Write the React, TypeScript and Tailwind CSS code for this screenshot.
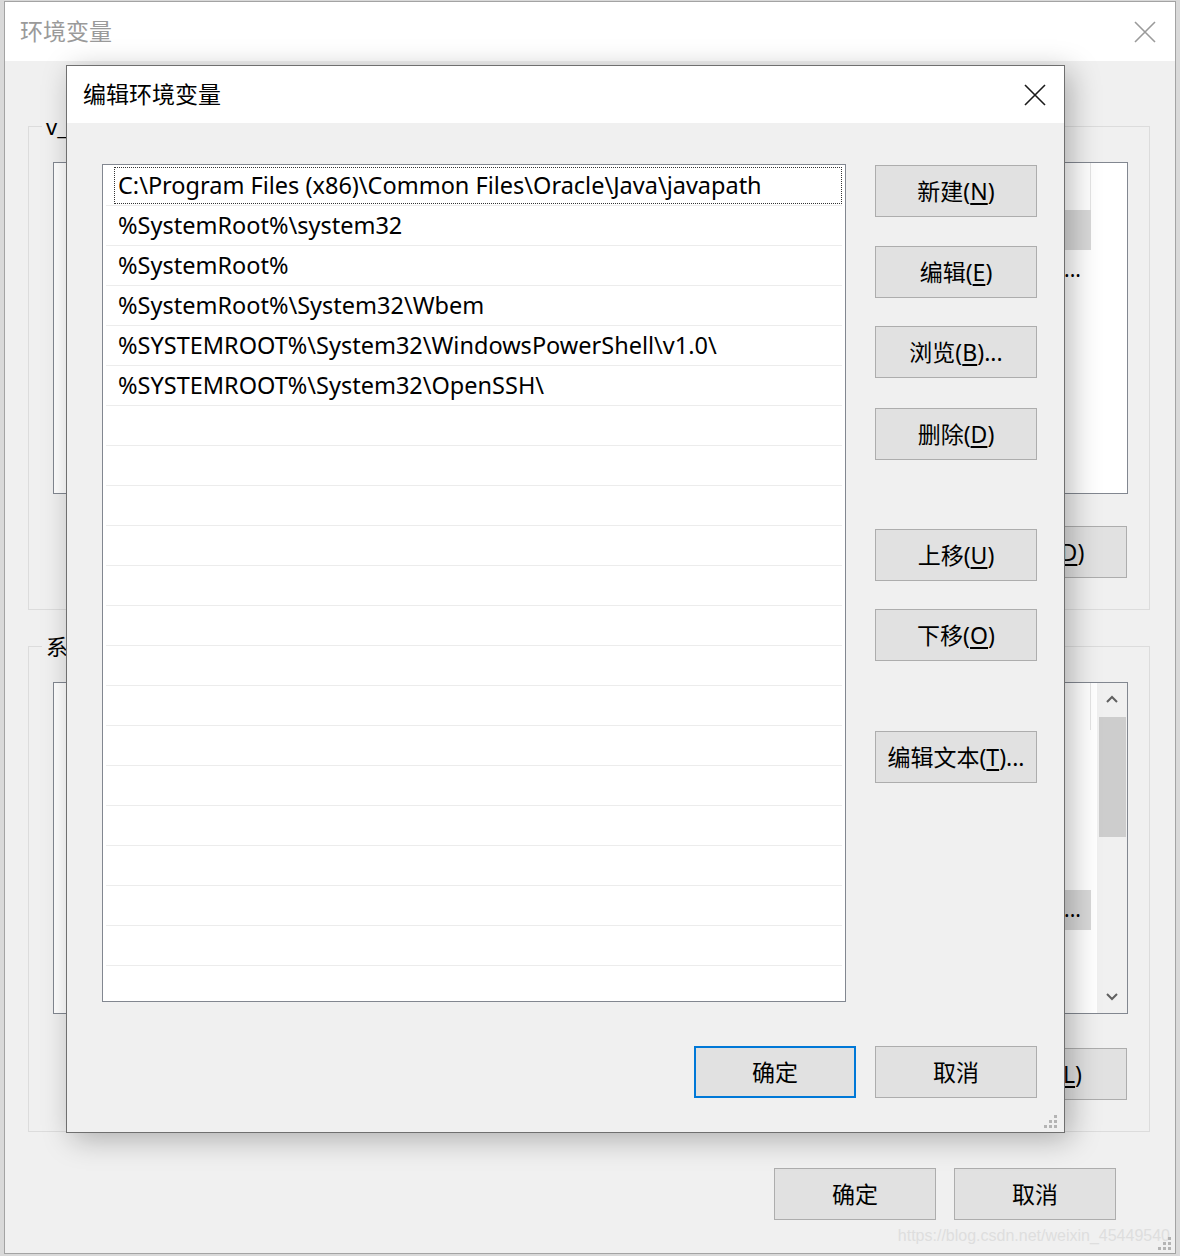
import React from 'react';

const FONT = "font-[family-name:'Noto_Sans','Noto_Sans_CJK_SC',sans-serif]";

const PATHS = [
  'C:\\Program Files (x86)\\Common Files\\Oracle\\Java\\javapath',
  '%SystemRoot%\\system32',
  '%SystemRoot%',
  '%SystemRoot%\\System32\\Wbem',
  '%SYSTEMROOT%\\System32\\WindowsPowerShell\\v1.0\\',
  '%SYSTEMROOT%\\System32\\OpenSSH\\',
];

const USER_VARS = [
  ['Path', '%USERPROFILE%\\AppData\\Local\\Microsoft\\WindowsApps;'],
  ['PyCharm Community Edition', 'D:\\Program Files\\JetBrains\\PyCharm Community Edition 2020.1\\bin;;C:\\Users\\v_\\AppData'],
  ['TEMP', '%USERPROFILE%\\AppData\\Local\\Temp'],
  ['TMP', '%USERPROFILE%\\AppData\\Local\\Temp'],
];

const SYS_VARS = [
  ['ComSpec', 'C:\\Windows\\system32\\cmd.exe'],
  ['DriverData', 'C:\\Windows\\System32\\Drivers\\DriverData'],
  ['NUMBER_OF_PROCESSORS', '8'],
  ['OS', 'Windows_NT'],
  ['Path', 'C:\\Program Files (x86)\\Common Files\\Oracle\\Java\\javapath;C:\\Windows\\system32;C:\\Windows;C:\\Windows\\System32\\Wbem'],
  ['PATHEXT', '.COM;.EXE;.BAT;.CMD;.VBS;.VBE;.JS;.JSE;.WSF;.WSH;.MSC'],
  ['PROCESSOR_ARCHITECTURE', 'AMD64'],
  ['PROCESSOR_IDENTIFIER', 'Intel64 Family 6 Model 142'],
];

function CloseIcon({ color, size = 22 }: { color: string; size?: number }) {
  return (
    <svg width={size} height={size} viewBox="0 0 22 22">
      <path d="M1 1 L21 21 M21 1 L1 21" stroke={color} strokeWidth="1.6" fill="none" />
    </svg>
  );
}

function Grip() {
  const dots = [
    [10, 0],
    [5, 5],
    [10, 5],
    [0, 10],
    [5, 10],
    [10, 10],
  ];
  return (
    <svg width="14" height="14" viewBox="0 0 14 14">
      {dots.map(([x, y]) => (
        <rect key={`${x}-${y}`} x={x} y={y} width="3" height="3" fill="#b4b4b4" />
      ))}
    </svg>
  );
}

interface WinButtonProps {
  label: string;
  mn?: string;
  tail?: string;
  primary?: boolean;
  className?: string;
}

function WinButton({ label, mn, tail = '', primary = false, className = '' }: WinButtonProps) {
  return (
    <div
      className={`flex h-[52px] w-[162px] shrink-0 items-center justify-center bg-[#e1e1e1] text-[23px] leading-none text-black ${
        primary ? 'border-2 border-[#0078d7]' : 'border border-[#adadad]'
      } ${className}`}
    >
      <span>
        {label}
        {mn && (
          <>
            (<span className="underline underline-offset-[3px]">{mn}</span>)
          </>
        )}
        {tail}
      </span>
    </div>
  );
}

// long values get clipped and an ellipsis drawn at the cell's end, like the win32 listview
function ValueCell({ value, selected }: { value: string; selected: boolean }) {
  const long = value.length > 60;
  return (
    <div className={`flex h-full w-[707px] items-center pl-[10px] pr-[10px] ${selected ? 'bg-[#d9d9d9]' : ''}`}>
      <span className="flex-1 overflow-hidden whitespace-nowrap">{value}</span>
      {long && <span className="shrink-0">...</span>}
    </div>
  );
}

function ListView({ rows, selected, scroll }: { rows: string[][]; selected: number; scroll?: boolean }) {
  return (
    <div className="flex h-[332px] border border-[#828790] bg-white">
      <div className="flex-1 overflow-hidden">
        <div className="flex h-[47px] w-[1037px] text-[21px] text-black">
          <div className="flex w-[330px] items-center border-r border-[#e5e5e5] pl-[18px]">变量</div>
          <div className="flex flex-1 items-center border-r border-[#e5e5e5] pl-[10px]">值</div>
        </div>
        {rows.map(([name, value], i) => (
          <div key={name} className="flex h-[40px] w-[1037px] items-center text-[21px]">
            <div className="w-[330px] truncate pl-[18px]">{name}</div>
            <ValueCell value={value} selected={i === selected} />
          </div>
        ))}
      </div>
      {scroll && (
        <div className="flex w-[30px] flex-col items-center bg-[#f0f0f0]">
          <svg width="14" height="30" viewBox="0 0 14 30">
            <path d="M2 19 L7 14 L12 19" stroke="#606060" strokeWidth="2" fill="none" />
          </svg>
          <div className="mt-[4px] h-[120px] w-[27px] bg-[#cdcdcd]" />
          <div className="flex-1" />
          <svg width="14" height="30" viewBox="0 0 14 30">
            <path d="M2 11 L7 16 L12 11" stroke="#606060" strokeWidth="2" fill="none" />
          </svg>
        </div>
      )}
    </div>
  );
}

interface GroupBoxProps {
  title: string;
  rows: string[][];
  selected: number;
  mn: string;
  scroll?: boolean;
  tall?: boolean;
}

function GroupBox({ title, rows, selected, mn, scroll, tall }: GroupBoxProps) {
  return (
    <div
      className={`relative flex flex-col border border-[#dcdcdc] pl-[24px] pr-[21px] pt-[35px] ${
        tall ? 'h-[486px]' : 'h-[484px]'
      }`}
    >
      <span className="absolute left-[13px] top-[-14px] bg-[#f0f0f0] px-[4px] text-[22px] leading-[26px] text-black">{title}</span>
      <ListView rows={rows} selected={selected} scroll={scroll} />
      <div className={`flex justify-end gap-[18px] pr-[1px] ${tall ? 'mt-[34px]' : 'mt-[32px]'}`}>
        <WinButton label="新建" mn={mn === 'D' ? 'N' : 'W'} tail="..." />
        <WinButton label="编辑" mn={mn === 'D' ? 'E' : 'I'} tail="..." />
        <WinButton label="删除" mn={mn} />
      </div>
    </div>
  );
}

function EditDialog() {
  return (
    <div className="absolute left-[66px] top-[65px] flex h-[1068px] w-[999px] flex-col border border-[#6f6f6f] bg-[#f0f0f0] shadow-[6px_6px_28px_rgba(0,0,0,0.28)]">
      <div className="flex h-[57px] items-center justify-between bg-white pl-[16px] pr-[18px]">
        <span className="text-[23px] text-black">编辑环境变量</span>
        <CloseIcon color="#1a1a1a" />
      </div>
      <div className="flex pl-[35px] pt-[41px]">
        <div className="h-[838px] w-[744px] overflow-hidden border border-[#828790] bg-white px-[3px] pt-[1px]">
          {Array.from({ length: 21 }, (_, i) => PATHS[i] ?? '').map((path, i) => (
            <div key={i} className="h-[40px] border-b border-[#ececec] pb-[1px] pt-[1px]">
              <div
                className={`ml-[8px] flex h-full items-center whitespace-nowrap border pl-[3px] text-[23.5px] text-black ${
                  i === 0 ? 'border-dotted border-[#333]' : 'border-transparent'
                }`}
              >
                {path}
              </div>
            </div>
          ))}
        </div>
        <div className="ml-[29px] flex flex-col pt-[1px]">
          <WinButton label="新建" mn="N" />
          <WinButton label="编辑" mn="E" className="mt-[29px]" />
          <WinButton label="浏览" mn="B" tail="..." className="mt-[28px]" />
          <WinButton label="删除" mn="D" className="mt-[30px]" />
          <WinButton label="上移" mn="U" className="mt-[69px]" />
          <WinButton label="下移" mn="O" className="mt-[28px]" />
          <WinButton label="编辑文本" mn="T" tail="..." className="mt-[70px]" />
        </div>
      </div>
      <div className="mt-[44px] flex justify-end gap-[19px] pr-[27px]">
        <WinButton label="确定" primary />
        <WinButton label="取消" />
      </div>
      <div className="absolute bottom-[3px] right-[6px]">
        <Grip />
      </div>
    </div>
  );
}

export default function App() {
  return (
    <div className={`relative h-[1256px] w-[1180px] overflow-hidden bg-[#d9d9d9] px-[4px] pb-[2px] pt-[1px] ${FONT}`}>
      <div className="flex h-full flex-col border border-[#a3a3a3] bg-[#f0f0f0]">
        <div className="flex h-[59px] items-center justify-between bg-white pl-[15px] pr-[19px]">
          <span className="text-[23px] text-[#9a9a9a]">环境变量</span>
          <CloseIcon color="#9a9a9a" />
        </div>
        <div className="flex flex-col pl-[23px] pr-[25px] pt-[65px]">
          <GroupBox title="v_ 的用户变量(U)" rows={USER_VARS} selected={0} mn="D" />
          <div className="mt-[36px]">
            <GroupBox title="系统变量(S)" rows={SYS_VARS} selected={4} mn="L" scroll tall />
          </div>
          <div className="mt-[36px] flex justify-end gap-[18px] pr-[34px]">
            <WinButton label="确定" />
            <WinButton label="取消" />
          </div>
        </div>
      </div>
      <EditDialog />
      <span className="absolute bottom-[8px] right-[10px] font-[family-name:'Liberation_Sans',sans-serif] text-[16px] text-[#dedede]">
        https://blog.csdn.net/weixin_45449540
      </span>
      <div className="absolute bottom-[5px] right-[8px]">
        <Grip />
      </div>
    </div>
  );
}
